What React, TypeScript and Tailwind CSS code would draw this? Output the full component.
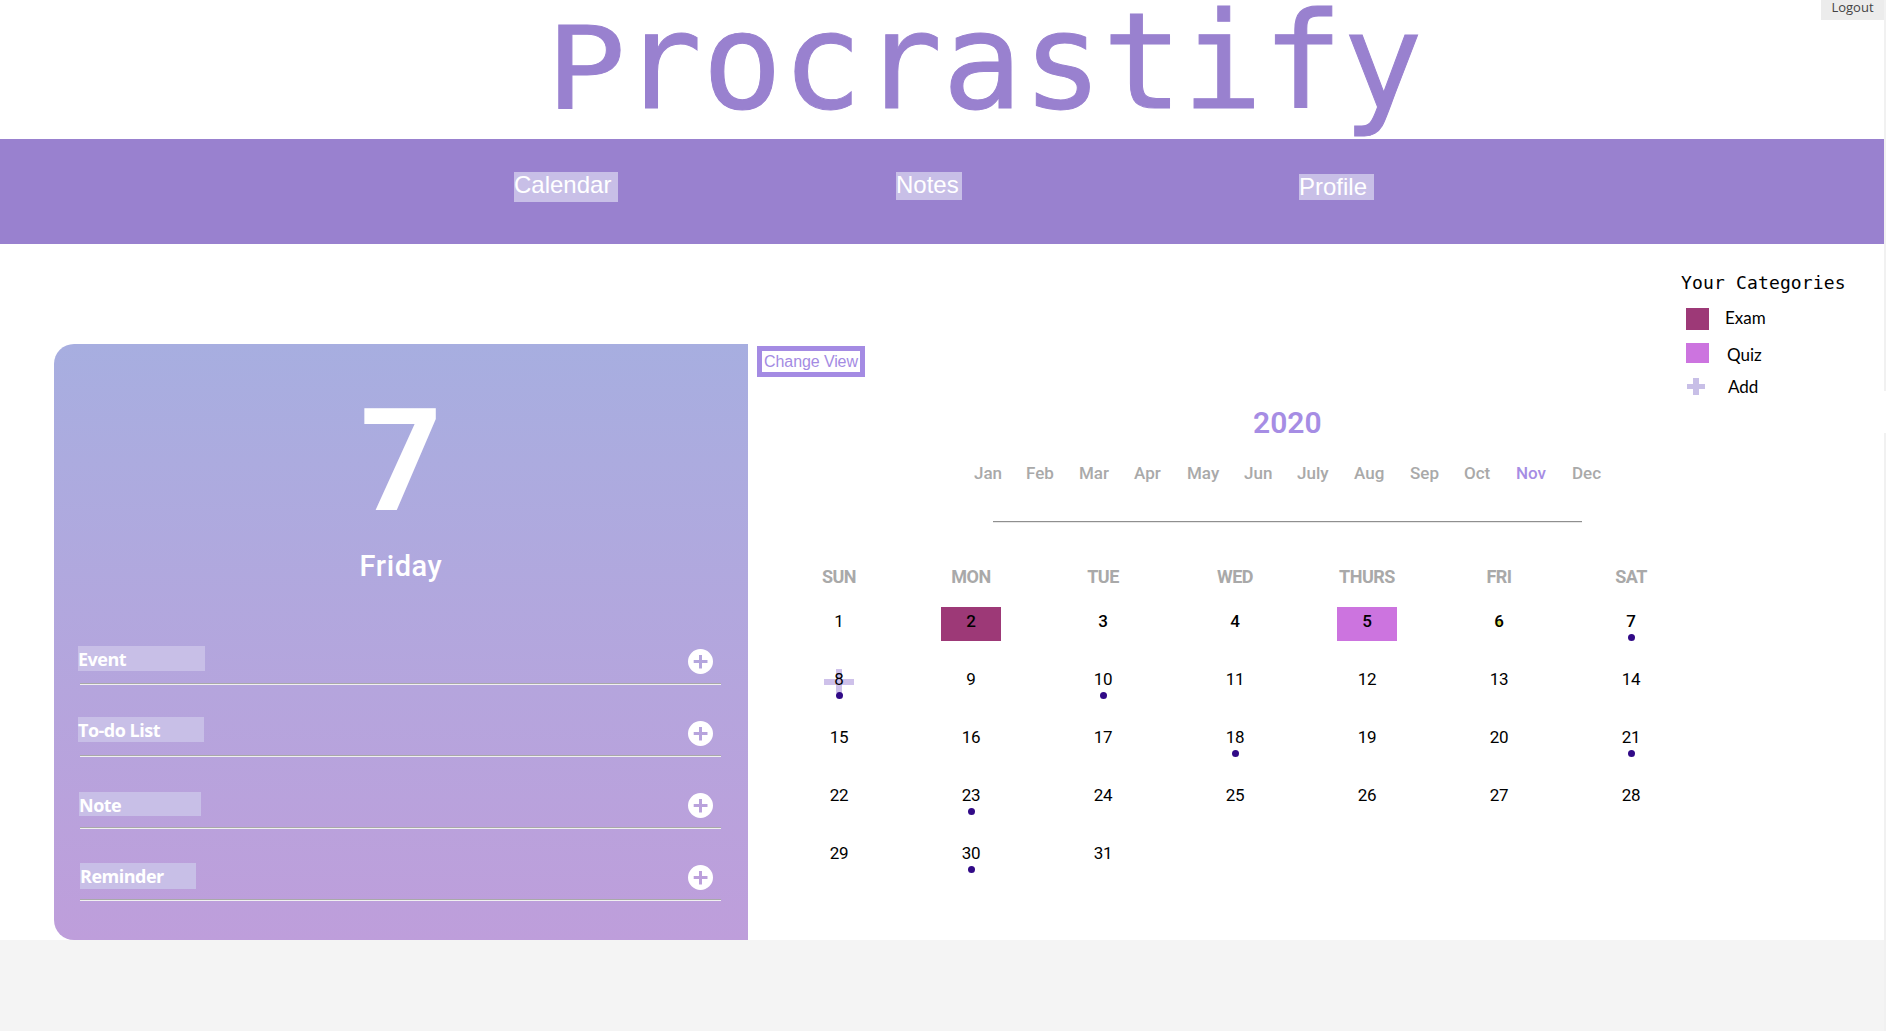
import React from "react";

const months = [
  { name: "Jan", w: "w-[52px]" },
  { name: "Feb", w: "w-[53px]" },
  { name: "Mar", w: "w-[55px]" },
  { name: "Apr", w: "w-[53px]" },
  { name: "May", w: "w-[57px]" },
  { name: "Jun", w: "w-[53px]" },
  { name: "July", w: "w-[57px]" },
  { name: "Aug", w: "w-[56px]" },
  { name: "Sep", w: "w-[54px]" },
  { name: "Oct", w: "w-[52px]" },
  { name: "Nov", w: "w-[56px]" },
  { name: "Dec", w: "w-[30px]" },
];

const weekdays = ["SUN", "MON", "TUE", "WED", "THURS", "FRI", "SAT"];
const dotted = [7, 8, 10, 18, 21, 23, 30];
const days = Array.from({ length: 31 }, (_, i) => i + 1);

const entries = [
  { label: "Event", box: "mt-[33px] ml-[-2px] w-[127px] h-[25px]" },
  { label: "To-do List", box: "mt-[32px] ml-[-2px] w-[126px] h-[25px]" },
  { label: "Note", box: "mt-[35px] ml-[-1px] w-[122px] h-[24px]" },
  { label: "Reminder", box: "mt-[34px] w-[116px] h-[26px]" },
];

function AddButton() {
  return (
    <svg width="25" height="25" viewBox="0 0 25 25" className="mr-2 mt-9 shrink-0">
      <path
        fill="#fff"
        fillRule="evenodd"
        d="M12.5 0a12.5 12.5 0 1 0 0 25a12.5 12.500 0 0 0 0-25zM11 6h3v5h5.500v3H14v5.500h-3V14H5.700v-3H11z"
      />
    </svg>
  );
}

function Cross({ className }: { className: string }) {
  return (
    <svg viewBox="0 0 18 17" className={className}>
      <path fill="#c8bfe7" d="M6 0h6v6h6v5h-6v6H6v-6H0V6h6z" />
    </svg>
  );
}

function Day({ n }: { n: number }) {
  return (
    <div className="flex h-[58px] justify-center">
      <div
        className={
          "relative h-[34px] w-[60px] text-center " +
          (n === 2 ? "bg-[#9d3977]" : n === 5 ? "bg-[#cc74df]" : "")
        }
      >
        {n === 8 && (
          <>
            <span className="absolute left-[27px] top-[4px] h-6 w-[6px] bg-[#cec1ea]" />
            <span className="absolute left-[15px] top-[14px] h-[6px] w-[30px] bg-[#cec1ea]" />
          </>
        )}
        {n === 6 && <span className="absolute left-[28px] top-[14px] h-[5px] w-[5px] bg-[#e3e04f]" />}
        <span
          className={
            "relative block text-[17px] leading-[28px] tracking-[-0.2px] text-black " +
            (n > 1 && n < 8 ? "font-medium" : "font-normal")
          }
        >
          {n}
        </span>
        {dotted.includes(n) && (
          <span className="absolute left-[27px] top-[27px] h-[7px] w-[7px] rounded-full bg-[#310a87]" />
        )}
      </div>
    </div>
  );
}

export default function App() {
  return (
    <div className="flex h-[1036px] w-full overflow-hidden bg-white font-['Roboto',sans-serif]">
      <div className="flex w-[1884px] shrink-0 flex-col">
        <header className="flex h-[139px] shrink-0 justify-between">
          <h1 className="ml-[546px] whitespace-pre font-['DejaVu_Sans_Mono',monospace] text-[133px] leading-[125px] text-[#9981cf] [-webkit-text-stroke:1px_#9981cf]">
            <span className="mr-[-4px] inline-block origin-[0_109px] scale-y-[0.857]">P</span>rocrastify
          </h1>
          <button className="h-5 w-[63px] bg-[#ececec] pb-[5px] font-['Open_Sans',sans-serif] text-[13px] leading-[15px] text-[#444]">
            Logout
          </button>
        </header>

        <nav className="flex h-[105px] shrink-0 items-start bg-[#9981cf] font-['Liberation_Sans',sans-serif] text-2xl leading-[26px] text-white">
          <a className="ml-[514px] mt-[33px] h-[30px] w-[104px] bg-[#c8bfe7]">Calendar</a>
          <a className="ml-[278px] mt-[33px] h-7 w-[66px] bg-[#c8bfe7]">Notes</a>
          <a className="ml-[337px] mt-[35px] h-[26px] w-[75px] bg-[#c8bfe7]">Profile</a>
        </nav>

        <main className="flex h-[696px] shrink-0">
          <aside className="ml-[54px] mt-[100px] flex h-[596px] w-[694px] shrink-0 flex-col rounded-l-[20px] bg-linear-to-b from-[#a7aee0] to-[#be9edb] text-white">
            <div className="flex h-[269px] flex-col items-center pt-[47px]">
              <div className="text-[142px] leading-[142px] font-bold">7</div>
              <div className="mt-[15px] text-[29px] leading-[36px] font-medium tracking-[0.6px]">Friday</div>
            </div>
            {entries.map((e) => (
              <div key={e.label} className="ml-[26px] flex h-[72px] w-[641px] flex-col">
                <div className="flex h-[70px] items-start justify-between">
                  <span
                    className={
                      "bg-[#c8bfe7] font-['Open_Sans',sans-serif] text-[18px] leading-[26px] font-bold tracking-[-0.5px] whitespace-nowrap " +
                      e.box
                    }
                  >
                    {e.label}
                  </span>
                  <AddButton />
                </div>
                <div className="h-px bg-[#a9a9a9]" />
                <div className="h-px bg-[#f0f0f0]" />
              </div>
            ))}
          </aside>

          <section className="flex w-[1136px] flex-col">
            <div className="flex h-[154px] shrink-0 items-start justify-between">
              <button className="ml-[9px] mt-[102px] h-[31px] w-[108px] border-[5px] border-[#a48be3] font-['Liberation_Sans',sans-serif] text-base leading-[21px] tracking-[-0.1px] whitespace-nowrap text-[#a48be3]">
                Change View
              </button>
              <div className="mr-[37px] w-[166px] pt-[25px] text-black">
                <h2 className="font-['DejaVu_Sans_Mono',monospace] text-[18px] leading-[28px] tracking-[0.15px] whitespace-nowrap">
                  Your Categories
                </h2>
                <ul className="flex flex-col pl-[5px] font-['Lato',sans-serif] text-[17px] leading-[22px]">
                  <li className="mt-[11px] flex h-[22px]">
                    <span className="h-[22px] w-[23px] bg-[#9d3977]" />
                    <span className="-mt-px ml-4">Exam</span>
                  </li>
                  <li className="mt-[13px] flex h-5">
                    <span className="h-5 w-[23px] bg-[#cc74df]" />
                    <span className="ml-[18px] mt-px">Quiz</span>
                  </li>
                  <li className="mt-[15px] flex h-[17px]">
                    <Cross className="ml-px h-[17px] w-[18px]" />
                    <span className="-mt-[2px] ml-[23px]">Add</span>
                  </li>
                </ul>
              </div>
            </div>

            <h2 className="ml-[505px] mt-[4px] text-[30px] leading-[42px] font-semibold text-[#a68de4]">2020</h2>
            <div className="ml-[226px] mt-[17px] flex text-[17px] leading-6 font-medium text-[#a9a9a9]">
              {months.map((m) => (
                <span key={m.name} className={m.w + " shrink-0 " + (m.name === "Nov" ? "text-[#a68de4]" : "")}>
                  {m.name}
                </span>
              ))}
            </div>
            <div className="ml-[245px] mt-[36px] h-[2px] w-[589px] border-t border-[#8f8f8f] bg-[#e8e8e8]" />
            <div className="ml-[25px] mt-[42px] grid w-[924px] grid-cols-7 text-center text-[18px] leading-6 font-bold tracking-[-0.5px] text-[#a9a9a9]">
              {weekdays.map((d) => (
                <span key={d}>{d}</span>
              ))}
            </div>
            <div className="ml-[25px] mt-[18px] grid w-[924px] grid-cols-7">
              {days.map((n) => (
                <Day key={n} n={n} />
              ))}
            </div>
          </section>
        </main>

        <footer className="h-[91px] shrink-0 bg-[#f4f4f4]" />
      </div>

      <div className="flex w-[2px] shrink-0 flex-col">
        <div className="h-[391px] bg-[#f1f1f1]" />
        <div className="mt-[42px] h-[598px] bg-[#f1f1f1]" />
      </div>
    </div>
  );
}
